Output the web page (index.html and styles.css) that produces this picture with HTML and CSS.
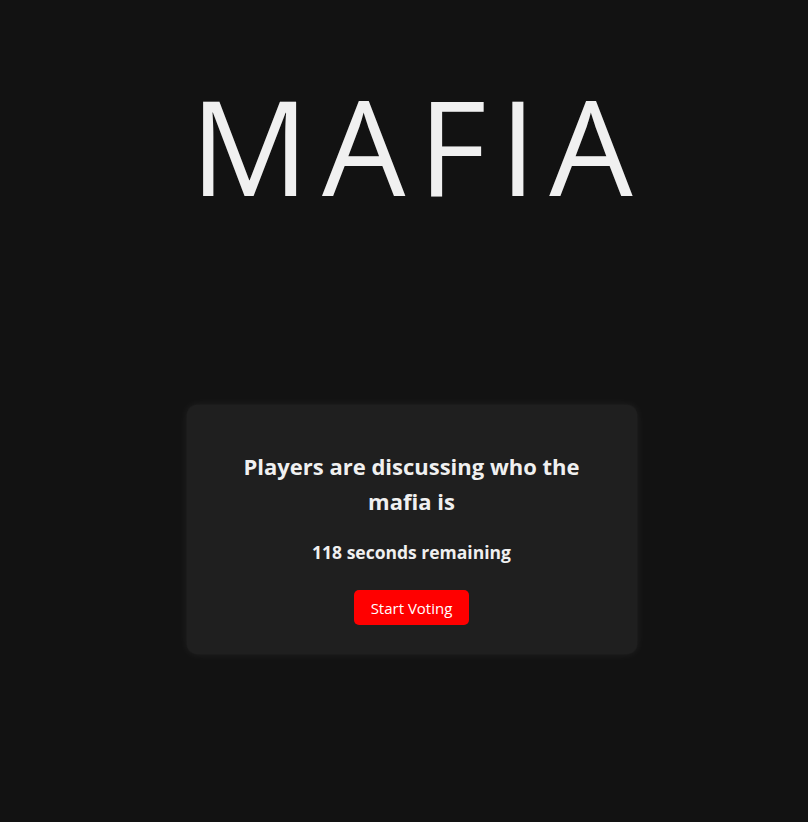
FILE: index.html
```html
<!DOCTYPE html>
<html>
<head>
<meta charset="utf-8">
<link rel="stylesheet" href="styles.css">
</head>
<body>
<div class="page">
  <h1 class="title">MAFIA</h1>
  <div class="card">
    <h2 class="card-heading">Players are discussing who the mafia is</h2>
    <p class="timer">118 seconds remaining</p>
    <button class="vote-btn">Start Voting</button>
  </div>
</div>
</body>
</html>
```
FILE: styles.css
```css
html, body {
  margin: 0;
  padding: 0;
  background: #121212;
  color: #f0f0f0;
  font-family: "Open Sans", "Noto Sans", sans-serif;
}
.page {
  display: flex;
  flex-direction: column;
  align-items: center;
  padding-left: 15px;
  min-height: 822px;
  box-sizing: border-box;
}
.title {
  margin: 66px 0 0 0;
  font-size: 132px;
  font-weight: 400;
  line-height: 1.2;
  letter-spacing: 13px;
  text-indent: 13px;
  color: #f0f0f0;
}
.card {
  margin-top: 181px;
  width: 450px;
  box-sizing: border-box;
  background: #1f1f1f;
  border-radius: 10px;
  box-shadow: 0 0 10px rgba(255,255,255,0.07), 0 0 2px rgba(255,255,255,0.05);
  padding: 44px 40px 29px;
  text-align: center;
}
.card-heading {
  margin: 0;
  font-size: 22px;
  font-weight: 700;
  line-height: 35px;
}
.timer {
  margin: 21px 0 0 0;
  font-size: 17.5px;
  font-weight: 700;
}
.vote-btn {
  margin-top: 26px;
  background: #ff0000;
  color: #fff;
  border: none;
  border-radius: 5px;
  font-family: inherit;
  font-size: 15px;
  padding: 7px 17px;
  height: 35px;
}
```
